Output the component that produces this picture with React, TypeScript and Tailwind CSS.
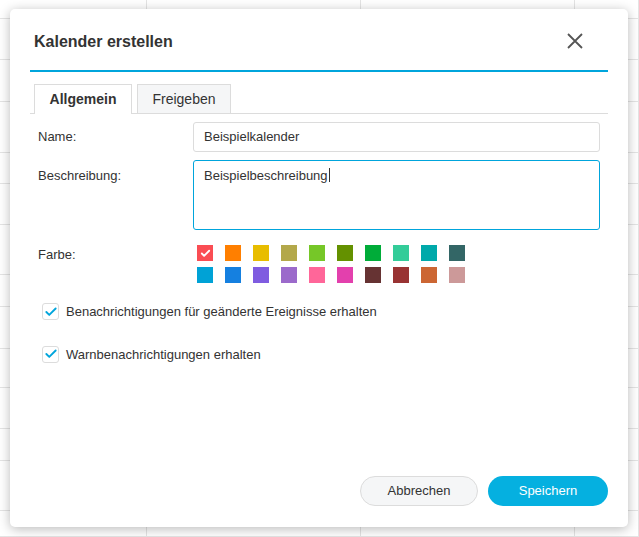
import { Check } from "lucide-react";

const colors = [
  ["#fa4d53", "#ff7f00", "#e8bd00", "#b3a84a", "#76c728", "#649100", "#00ac39", "#33cc99", "#00a9aa", "#336666"],
  ["#00a2d6", "#1580e0", "#7f5ce0", "#9b6acb", "#ff6699", "#e340ad", "#663333", "#993333", "#cc6633", "#cc9999"],
];

const rowHeights = [19, 41, 42, 51, 31, 41, 50, 32, 42, 39, 41, 32, 50, 26];

function Checkbox({ label }: { label: string }) {
  return (
    <label className="flex items-center gap-[7px] pl-1">
      <span className="flex h-[17px] w-[17px] items-center justify-center rounded-[3px] border border-[#dcdcdc] bg-white">
        <Check className="h-[14px] w-[14px] text-[#00a5dc]" strokeWidth={3.2} />
      </span>
      <span className="text-[13px] text-[#333]">{label}</span>
    </label>
  );
}

export default function App() {
  return (
    <div className="relative h-[537px] w-[639px] overflow-hidden bg-white font-['Liberation_Sans',Arial,sans-serif]">
      {/* calendar grid behind the dialog */}
      <div className="grid grid-cols-[147px_214px_214px_1fr]">
        {rowHeights.map((h, r) =>
          [0, 1, 2, 3].map((c) => (
            <div
              key={`${r}-${c}`}
              className="border-b border-r border-[#e4e4e4]"
              style={{ height: h }}
            />
          ))
        )}
      </div>

      {/* Dialog */}
      <div className="absolute left-[10px] top-[9px] flex h-[518px] w-[618px] flex-col rounded-[5px] bg-white px-5 shadow-[0_2px_12px_rgba(0,0,0,0.28)]">
        <div className="flex h-[61px] items-start justify-between pl-1 pt-[22px]">
          <h1 className="text-[16px] font-bold leading-[22px] text-[#333]">Kalender erstellen</h1>
          <button className="mr-[25px] mt-[2px]">
            <svg width="16" height="16" viewBox="0 0 16 16" fill="none" stroke="#555" strokeWidth="1.8">
              <path d="M1 1L15 15M15 1L1 15" />
            </svg>
          </button>
        </div>
        <div className="h-[2px] bg-[#00a5dc]" />

        {/* Tabs */}
        <div className="mt-[12px] flex gap-[5px] border-b border-[#dcdcdc] pl-1">
          <div className="-mb-px flex h-[30px] w-[98px] items-center justify-center border border-b-0 border-[#dcdcdc] bg-white text-[14px] font-bold text-[#333]">
            Allgemein
          </div>
          <div className="flex h-[29px] w-[94px] items-center justify-center border border-b-0 border-[#dcdcdc] bg-[#f5f6f7] text-[14px] text-[#333]">
            Freigeben
          </div>
        </div>

        {/* Form */}
        <div className="flex flex-col px-2 pt-[8px] text-[13px] text-[#333]">
          <div className="flex items-center">
            <span className="w-[155px]">Name:</span>
            <div className="flex h-[30px] flex-1 items-center rounded-[3px] border border-[#dcdcdc] px-[10px]">
              Beispielkalender
            </div>
          </div>

          <div className="mt-[8px] flex items-start">
            <span className="w-[155px] pt-[6px]">Beschreibung:</span>
            <div className="h-[70px] flex-1 rounded-[3px] border border-[#00a5dc] px-[10px] pt-[5px]">
              Beispielbeschreibung<span className="ml-px inline-block h-[14px] w-px translate-y-[2px] bg-[#333]" />
            </div>
          </div>

          <div className="mt-[15px] flex items-start">
            <span className="w-[155px]">Farbe:</span>
            <div className="flex flex-col gap-[6px] pl-1">
              {colors.map((row, i) => (
                <div key={i} className="flex gap-[12px]">
                  {row.map((c, j) => (
                    <div
                      key={c}
                      className="flex h-4 w-4 items-center justify-center"
                      style={{ backgroundColor: c }}
                    >
                      {i === 0 && j === 0 && (
                        <Check className="h-[11px] w-[11px] text-white" strokeWidth={4} />
                      )}
                    </div>
                  ))}
                </div>
              ))}
            </div>
          </div>

          <div className="mt-[19px] flex flex-col gap-[23px]">
            <Checkbox label="Benachrichtigungen für geänderte Ereignisse erhalten" />
            <Checkbox label="Warnbenachrichtigungen erhalten" />
          </div>
        </div>

        {/* Footer */}
        <div className="mt-auto flex justify-end gap-[10px] pb-[21px]">
          <button className="h-[30px] w-[118px] rounded-full border border-[#dcdcdc] bg-[#f5f6f7] text-[13px] text-[#333]">
            Abbrechen
          </button>
          <button className="h-[30px] w-[120px] rounded-full bg-[#05b0e0] text-[13px] text-white">
            Speichern
          </button>
        </div>
      </div>
    </div>
  );
}
